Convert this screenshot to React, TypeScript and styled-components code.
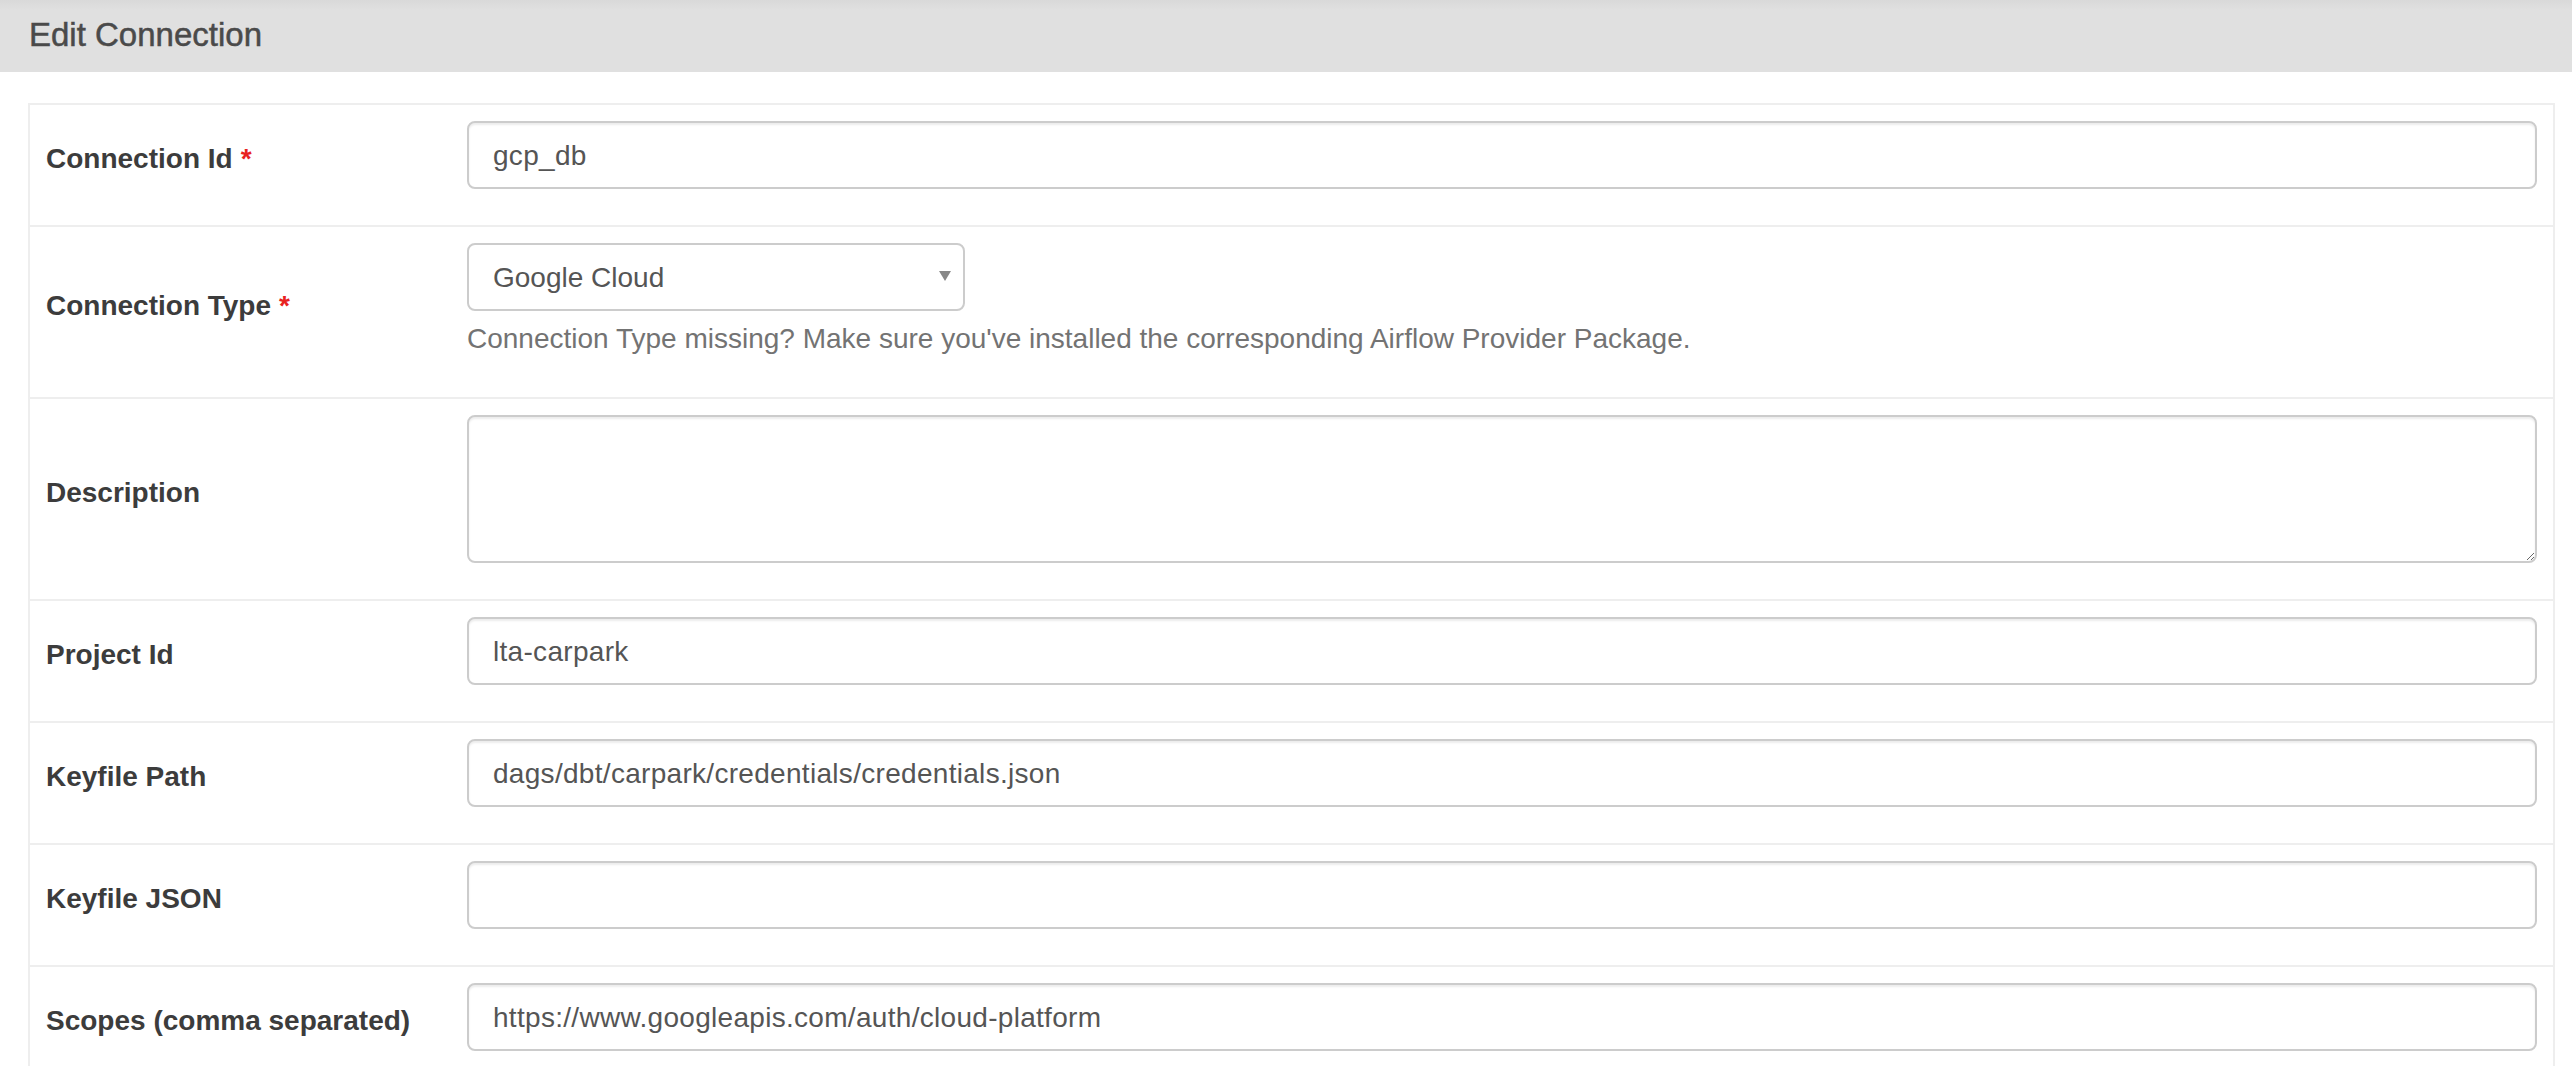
import React from "react";
import styled, { createGlobalStyle } from "styled-components";

const GlobalStyle = createGlobalStyle`
  html, body {
    margin: 0;
    padding: 0;
    background: #ffffff;
  }
  body {
    font-family: "Liberation Sans", Arial, Helvetica, sans-serif;
    color: #333333;
  }
  * { box-sizing: border-box; }
`;

const Page = styled.div`
  display: flex;
  flex-direction: column;
  width: 100%;
`;

const Header = styled.div`
  background: linear-gradient(to bottom, #d9d9d9 0px, #e0e0e0 10px, #e0e0e0 100%);
  height: 72px;
  padding: 18px 0 0 29px;
`;

const Title = styled.h1`
  margin: 0;
  font-family: "Liberation Sans", Arial, Helvetica, sans-serif;
  font-weight: 400;
  font-size: 33px;
  line-height: 33px;
  color: #4a4a4a;
  -webkit-text-stroke: 0.5px #4a4a4a;
  letter-spacing: 0px;
`;

const Table = styled.div`
  margin: 31px 17px 0 28px;
  border: 2px solid #eeeeee;
  border-bottom: none;
  display: flex;
  flex-direction: column;
`;

const Row = styled.div`
  display: grid;
  grid-template-columns: 421px 1fr;
  border-top: 2px solid #eeeeee;
  &:first-child {
    border-top: none;
  }
`;

const LabelCell = styled.div`
  display: flex;
  align-items: center;
  padding: 0 16px 12px 16px;
  font-family: "Liberation Sans", Arial, Helvetica, sans-serif;
  font-weight: 700;
  font-size: 28px;
  color: #3c3c3c;
  white-space: nowrap;
`;

const Required = styled.span`
  color: #e8231f;
  margin-left: 8px;
`;

const FieldCell = styled.div`
  padding: 16px 16px 36px 16px;
  display: flex;
  flex-direction: column;
  align-items: flex-start;
`;

const fieldBase = `
  font-family: "Liberation Sans", Arial, Helvetica, sans-serif;
  font-size: 28px;
  letter-spacing: 0.3px;
  color: #555555;
  background: #ffffff;
  border: 2px solid #cccccc;
  border-radius: 8px;
  box-shadow: inset 0 2px 2px rgba(0, 0, 0, 0.075);
  padding: 0 24px;
  outline: none;
  margin: 0;
`;

const TextInput = styled.input`
  ${fieldBase}
  width: 100%;
  height: 68px;
  line-height: 64px;
  padding-top: 1px;
`;

const TextArea = styled.textarea`
  ${fieldBase}
  width: 100%;
  height: 148px;
  padding: 12px 24px;
  resize: vertical;
  display: block;
`;

const SelectWrap = styled.div`
  position: relative;
  width: 498px;
  &::after {
    content: "";
    position: absolute;
    right: 14px;
    top: 28px;
    width: 0;
    height: 0;
    border-left: 6px solid transparent;
    border-right: 6px solid transparent;
    border-top: 10px solid #888888;
    pointer-events: none;
  }
`;

const Select = styled.select`
  ${fieldBase}
  letter-spacing: 0px;
  width: 100%;
  height: 68px;
  appearance: none;
  -webkit-appearance: none;
  box-shadow: none;
`;

const HelpText = styled.p`
  margin: 10px 0 4px 0;
  font-family: "Liberation Sans", Arial, Helvetica, sans-serif;
  font-size: 28px;
  line-height: 36px;
  color: #737373;
`;

type Field = {
  label: string;
  required?: boolean;
  kind: "input" | "select" | "textarea";
  value?: string;
  help?: string;
};

const fields: Field[] = [
  { label: "Connection Id", required: true, kind: "input", value: "gcp_db" },
  {
    label: "Connection Type",
    required: true,
    kind: "select",
    value: "Google Cloud",
    help: "Connection Type missing? Make sure you've installed the corresponding Airflow Provider Package.",
  },
  { label: "Description", kind: "textarea", value: "" },
  { label: "Project Id", kind: "input", value: "lta-carpark" },
  { label: "Keyfile Path", kind: "input", value: "dags/dbt/carpark/credentials/credentials.json" },
  { label: "Keyfile JSON", kind: "input", value: "" },
  { label: "Scopes (comma separated)", kind: "input", value: "https://www.googleapis.com/auth/cloud-platform" },
];

function renderControl(f: Field) {
  if (f.kind === "select") {
    return (
      <>
        <SelectWrap>
          <Select defaultValue={f.value}>
            <option value={f.value}>{f.value}</option>
          </Select>
        </SelectWrap>
        {f.help && <HelpText>{f.help}</HelpText>}
      </>
    );
  }
  if (f.kind === "textarea") {
    return <TextArea defaultValue={f.value} />;
  }
  return <TextInput type="text" defaultValue={f.value} />;
}

export default function App() {
  return (
    <Page>
      <GlobalStyle />
      <Header>
        <Title>Edit Connection</Title>
      </Header>
      <Table>
        {fields.map((f) => (
          <Row key={f.label}>
            <LabelCell>
              {f.label}
              {f.required && <Required>*</Required>}
            </LabelCell>
            <FieldCell>{renderControl(f)}</FieldCell>
          </Row>
        ))}
      </Table>
    </Page>
  );
}
